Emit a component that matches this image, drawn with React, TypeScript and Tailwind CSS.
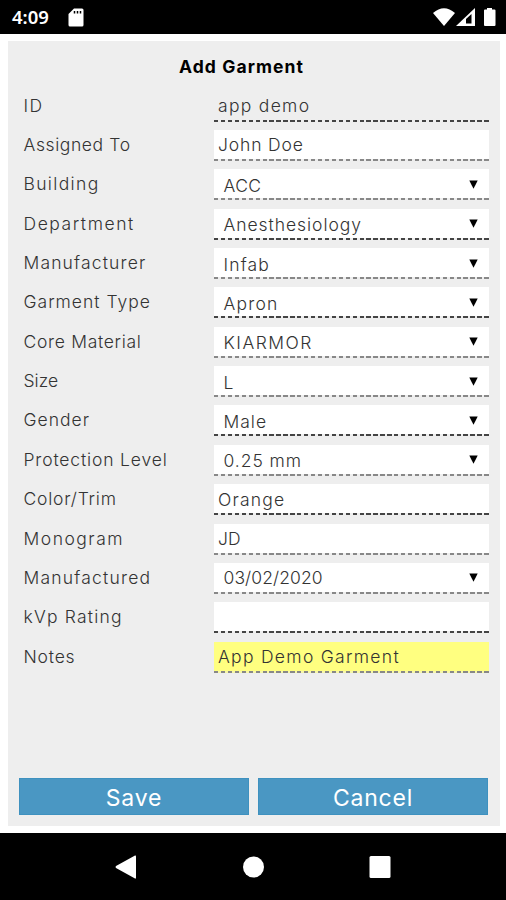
import clsx from "clsx";

type Field = {
  label: string;
  value: string;
  type?: "text" | "select" | "date" | "readonly" | "notes";
  dark?: boolean; // stronger underline
  labelClass?: string;
  valueClass?: string;
};

const fields: Field[] = [
  { label: "ID", value: "app demo", type: "readonly", dark: true, labelClass: "tracking-[1.5px]", valueClass: "tracking-[1.3px]" },
  { label: "Assigned To", value: "John Doe", labelClass: "tracking-[0.6px]", valueClass: "tracking-[0.85px]" },
  { label: "Building", value: "ACC", type: "select", labelClass: "tracking-[1.35px]", valueClass: "tracking-[0.4px]" },
  { label: "Department", value: "Anesthesiology", type: "select", dark: true, labelClass: "tracking-[1.55px]", valueClass: "tracking-[0.95px]" },
  { label: "Manufacturer", value: "Infab", type: "select", labelClass: "tracking-[1.15px]", valueClass: "tracking-[1.15px]" },
  { label: "Garment Type", value: "Apron", type: "select", dark: true, labelClass: "tracking-[1px]", valueClass: "tracking-[1.2px]" },
  { label: "Core Material", value: "KIARMOR", type: "select", labelClass: "tracking-[0.7px]", valueClass: "tracking-[1.5px]" },
  { label: "Size", value: "L", type: "select" },
  { label: "Gender", value: "Male", type: "select", dark: true, labelClass: "tracking-[1px]", valueClass: "tracking-[1px]" },
  { label: "Protection Level", value: "0.25 mm", type: "select", labelClass: "tracking-[0.85px]", valueClass: "tracking-[0.95px]" },
  { label: "Color/Trim", value: "Orange", dark: true, labelClass: "tracking-[0.8px]", valueClass: "tracking-[1.2px]" },
  { label: "Monogram", value: "JD", labelClass: "tracking-[1.5px]" },
  { label: "Manufactured", value: "03/02/2020", type: "date", labelClass: "tracking-[1.2px]", valueClass: "tracking-[0.1px]" },
  { label: "kVp Rating", value: "", dark: true, labelClass: "tracking-[1.2px]" },
  { label: "Notes", value: "App Demo Garment", type: "notes", labelClass: "tracking-[0.8px]", valueClass: "tracking-[1.3px]" },
];

const StatusBar = () => (
  <header className="flex h-[34px] items-center bg-black pl-3 pr-[10px] text-white">
    <span className="w-[56px] font-['Noto_Sans',sans-serif] text-[18.5px] font-semibold leading-none">
      4:09
    </span>
    <svg width="16" height="19" viewBox="0 0 16 19">
      <path d="M6 0.5H14Q15.5 0.5 15.5 2V17Q15.5 18.5 14 18.5H2Q0.5 18.5 0.5 17V6Z" fill="#fff" />
      <path d="M6.5 3V5.5M9.5 3V5.5M12.5 3V5.5" stroke="#000" strokeWidth="1.5" />
    </svg>
    <svg className="ml-auto" width="63" height="20" viewBox="0 0 63 20">
      <path d="M0 6Q11 -3.5 22 6L11 19Z" fill="#fff" />
      <path d="M23 19L42 1V19Z" fill="#fff" />
      <path d="M33 16.5V12L38.5 7V16.5Z" fill="#000" />
      <path d="M54 1H59V2.5H61.5Q62.5 2.5 62.5 3.5V18Q62.5 19 61.5 19H52Q51 19 51 18V3.5Q51 2.5 52 2.5H54Z" fill="#fff" />
    </svg>
  </header>
);

const FieldRow = ({ field }: { field: Field }) => {
  const hasArrow = field.type === "select" || field.type === "date";
  return (
    <div className="flex h-[31px] text-[17.5px] font-light leading-[30px] text-[#333]">
      <label className={clsx("w-[190px] whitespace-nowrap", field.labelClass)}>
        {field.label}
      </label>
      <div
        className={clsx(
          "flex flex-1 flex-col",
          field.type === "notes" && "bg-[#ffff80]",
          (!field.type || hasArrow) && "bg-white"
        )}
      >
        <div
          className={clsx(
            "flex h-[29px] items-center justify-between pr-[11px]",
            hasArrow ? "pl-[10px]" : "pl-[4.5px]",
            field.type === "select" ? "pt-[4px]" : "pt-[2px]"
          )}
        >
          <span className={clsx("whitespace-nowrap", field.valueClass)}>{field.value}</span>
          {hasArrow && (
            <svg
              className={field.type === "date" ? "mb-[1px]" : "mb-[3px]"}
              width="9"
              height="9"
              viewBox="0 0 9 9"
            >
              <path d="M0.3 0.5H8.7L4.5 8.7Z" fill="#000" />
            </svg>
          )}
        </div>
        <div
          className={clsx(
            "h-[2px]",
            field.type === "notes" ? "bg-[#f6f6a8]" : "bg-[#eee]",
            field.dark
              ? "bg-[repeating-linear-gradient(90deg,#444_0px,#444_4.3px,transparent_4.3px,transparent_6.93px)]"
              : "bg-[repeating-linear-gradient(90deg,#888_0px,#888_4.3px,transparent_4.3px,transparent_6.93px)]"
          )}
        />
      </div>
    </div>
  );
};

const NavBar = () => (
  <nav className="flex h-[67px] items-center bg-black pl-[115px]">
    <svg width="276" height="24" viewBox="0 0 276 24" fill="#fff">
      <path d="M20 0.5Q21 0 21 1.5V22.5Q21 24 20 23.5L1 13Q0 12 1 11Z" />
      <circle cx="138.5" cy="12" r="10.5" />
      <rect x="254.5" y="1" width="21" height="22" rx="1.5" />
    </svg>
  </nav>
);

const App = () => {
  return (
    <div className="flex h-[900px] w-[506px] flex-col bg-white font-['Inter',sans-serif]">
      <StatusBar />
      <main className="mb-[7px] ml-[8px] mr-[6px] mt-[7px] flex flex-1 flex-col bg-[#eee] pb-[11px] pl-[11px] pr-[11px]">
        <h1 className="mr-[25px] mt-[14px] text-center text-[17.5px] font-bold leading-6 tracking-[1.1px] text-black">
          Add Garment
        </h1>
        <form className="ml-[4.5px] mt-[11.6px] flex flex-col gap-[8.36px]">
          {fields.map((field) => (
            <FieldRow key={field.label} field={field} />
          ))}
        </form>
        <div className="mr-px mt-auto grid h-[37px] grid-cols-2 gap-[9px] text-[23px] leading-8 tracking-[0.8px] text-white">
          <button className="border border-[#3e91bf] bg-[#4a97c3] pt-[2px]">Save</button>
          <button className="border border-[#3e91bf] bg-[#4a97c3] pt-[2px]">Cancel</button>
        </div>
      </main>
      <NavBar />
    </div>
  );
};

export default App;
